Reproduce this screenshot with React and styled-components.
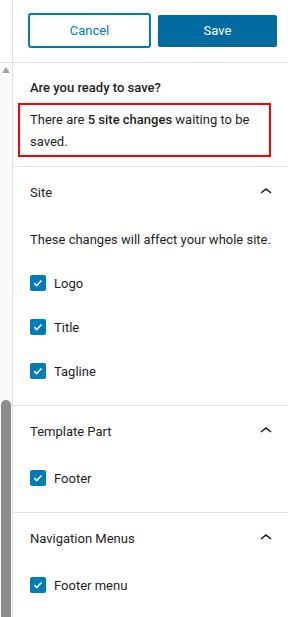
import styled, { createGlobalStyle } from "styled-components";

const GlobalStyle = createGlobalStyle`
  html, body {
    margin: 0;
    background: #fff;
  }
  body {
    font-family: Roboto, "Noto Sans", sans-serif;
    font-size: 13px;
    color: #1e1e1e;
  }
`;

const sections = [
  {
    title: "Site",
    note: "These changes will affect your whole site.",
    items: ["Logo", "Title", "Tagline"],
  },
  { title: "Template Part", items: ["Footer"] },
  { title: "Navigation Menus", items: ["Footer menu"] },
];

const ChevronUp = () => (
  <svg width="24" height="24" viewBox="0 0 24 24" aria-hidden="true">
    <path d="M6.5 12.4L12 8l5.5 4.4-.9 1.2L12 10l-4.6 3.6-1-1.2z" fill="#1e1e1e" />
  </svg>
);

const Check = () => (
  <svg width="16" height="16" viewBox="0 0 16 16" aria-hidden="true">
    <path d="M4.3 8.2l2.4 2.3 4.8-5" fill="none" stroke="#fff" strokeWidth="1.6" />
  </svg>
);

const App = () => {
  return (
    <Page>
      <GlobalStyle />
      <Gutter>
        <GutterTop />
        <Track>
          <UpArrow />
          <Thumb />
        </Track>
      </Gutter>
      <Main>
        <Header>
          <CancelButton>Cancel</CancelButton>
          <SaveButton>Save</SaveButton>
        </Header>
        <Intro>
          <Question>Are you ready to save?</Question>
          <Notice>
            <span>There are </span>
            <strong>5 site changes</strong>
            <span> waiting to be </span>
            <span>saved.</span>
          </Notice>
        </Intro>
        {sections.map((s) => (
          <Section key={s.title}>
            <SectionHead>
              <span>{s.title}</span>
              <ChevronUp />
            </SectionHead>
            {s.note && <Note>{s.note}</Note>}
            {s.items.map((item) => (
              <CheckRow key={item}>
                <Box>
                  <Check />
                </Box>
                {item}
              </CheckRow>
            ))}
          </Section>
        ))}
      </Main>
    </Page>
  );
};

const Page = styled.div`
  display: flex;
  width: 288px;
  height: 617px;
  overflow: hidden;
`;

const Gutter = styled.div`
  width: 12px;
  display: flex;
  flex-direction: column;
  flex-shrink: 0;
`;

const GutterTop = styled.div`
  height: 62px;
  flex-shrink: 0;
  border-bottom: 1px solid #e0e0e0;
`;

const Track = styled.div`
  flex: 1;
  display: flex;
  flex-direction: column;
  align-items: center;
  background: #fafafa;
`;

const UpArrow = styled.div`
  margin-top: 4px;
  width: 0;
  height: 0;
  border-left: 4px solid transparent;
  border-right: 4px solid transparent;
  border-bottom: 6px solid #a3a3a3;
`;

const Thumb = styled.div`
  margin-top: auto;
  width: 10px;
  height: 217px;
  flex-shrink: 0;
  border-radius: 5px 5px 0 0;
  background: #8c8c8c;
`;

const Main = styled.div`
  flex: 1;
  border-left: 1px solid #e0e0e0;
  display: flex;
  flex-direction: column;
`;

const Header = styled.div`
  height: 63px;
  flex-shrink: 0;
  box-sizing: border-box;
  border-bottom: 1px solid #e0e0e0;
  display: flex;
  align-items: center;
  padding: 0 11px 1px 15px;
  gap: 7px;
`;

const CancelButton = styled.button`
  width: 123px;
  height: 35px;
  box-sizing: border-box;
  border: 2px solid #007cba;
  border-radius: 3px;
  background: #fff;
  color: #007cba;
  font: inherit;
  padding: 0;
`;

const SaveButton = styled.button`
  width: 119px;
  height: 32px;
  border: none;
  border-radius: 2px;
  background: #006ba1;
  color: #fff;
  font: inherit;
  padding: 0;
`;

const Intro = styled.div`
  flex-shrink: 0;
  padding: 15px 17px 9px 17px;
`;

const Question = styled.div`
  font-weight: 500;
  line-height: 20px;
`;

const Notice = styled.div`
  margin: 5px 0 0 -12px;
  border: 2px solid #f00;
  padding: 4px 10px 2px;
  line-height: 22px;

  strong {
    font-weight: 500;
  }
`;

const Section = styled.div`
  flex-shrink: 0;
  border-top: 1px solid #e0e0e0;
  padding: 0 10px 12px 17px;
`;

const SectionHead = styled.div`
  height: 50px;
  display: flex;
  align-items: center;
  justify-content: space-between;
`;

const Note = styled.div`
  height: 44px;
  display: flex;
  align-items: center;
`;

const CheckRow = styled.div`
  height: 44px;
  display: flex;
  align-items: center;
  gap: 8px;
`;

const Box = styled.span`
  width: 16px;
  height: 16px;
  border-radius: 2px;
  background: #007cba;
  display: flex;
`;

export default App;
